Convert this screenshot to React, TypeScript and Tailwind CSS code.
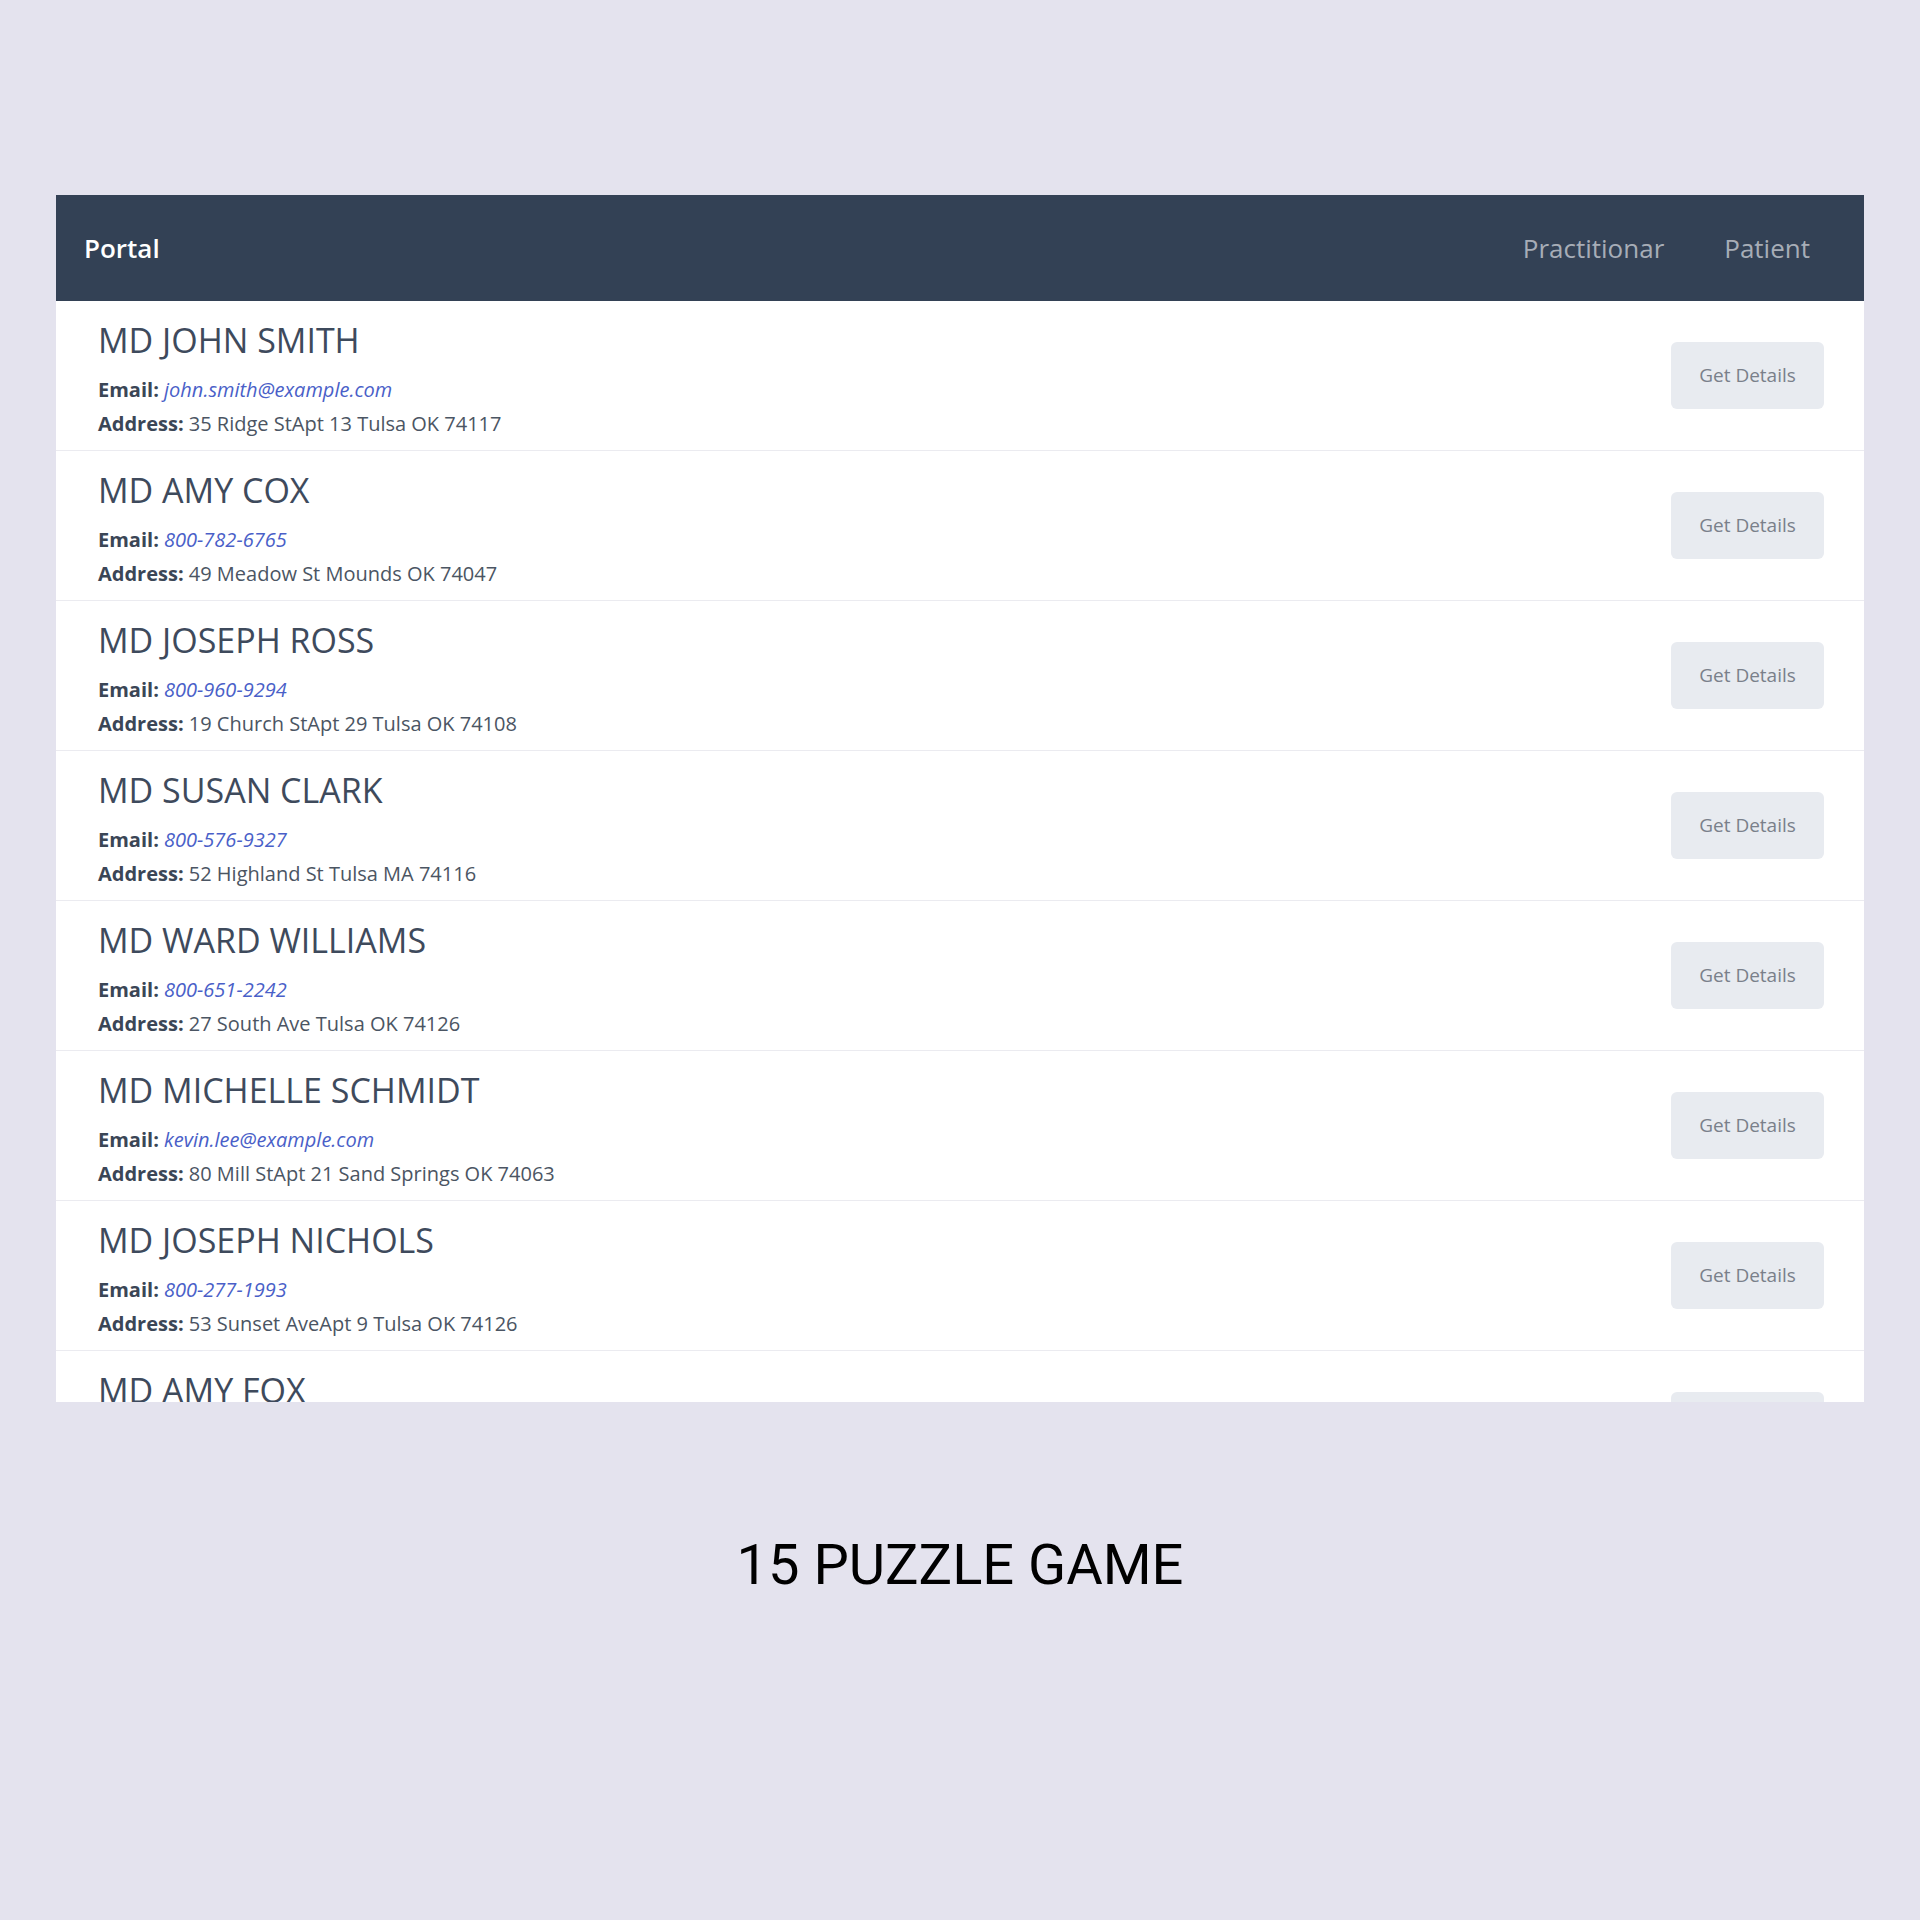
const doctors = [
  { name: "MD JOHN SMITH", email: "john.smith@example.com", address: "35 Ridge StApt 13 Tulsa OK 74117" },
  { name: "MD AMY COX", email: "800-782-6765", address: "49 Meadow St Mounds OK 74047" },
  { name: "MD JOSEPH ROSS", email: "800-960-9294", address: "19 Church StApt 29 Tulsa OK 74108" },
  { name: "MD SUSAN CLARK", email: "800-576-9327", address: "52 Highland St Tulsa MA 74116" },
  { name: "MD WARD WILLIAMS", email: "800-651-2242", address: "27 South Ave Tulsa OK 74126" },
  { name: "MD MICHELLE SCHMIDT", email: "kevin.lee@example.com", address: "80 Mill StApt 21 Sand Springs OK 74063" },
  { name: "MD JOSEPH NICHOLS", email: "800-277-1993", address: "53 Sunset AveApt 9 Tulsa OK 74126" },
  { name: "MD AMY FOX", email: "800-555-0142", address: "12 Pine St Tulsa OK 74105" },
];

const App = () => {
  return (
    <div className="w-[1920px] h-[1920px] bg-[#e4e3ee] flex flex-col items-center pt-[195px]">
      <div
        className="w-[1808px] h-[1207px] overflow-hidden bg-white flex flex-col"
        style={{ fontFamily: '"Open Sans", sans-serif' }}
      >
        <div className="h-[106px] shrink-0 bg-[#334155] flex items-center justify-between pl-[28px] pr-[54px]">
          <span className="text-[26px] text-white font-semibold">Portal</span>
          <div className="flex items-center gap-[60px] text-[26px] text-[#a7adb7]">
            <span>Practitionar</span>
            <span>Patient</span>
          </div>
        </div>
        {doctors.map((doc) => (
          <div
            key={doc.name}
            className="h-[150px] shrink-0 border-b border-[#ebebf0] flex items-center justify-between pl-[42px] pr-[40px]"
          >
            <div className="flex flex-col pt-[10px]">
              <h2 className="text-[34px] leading-[40px] text-[#3e4a5c]">{doc.name}</h2>
              <p className="mt-[13px] text-[20px] leading-[34px] text-[#4b5563]">
                <span className="font-bold text-[#3b4656]">Email: </span>
                <a className="italic text-[#4a5fc8]">{doc.email}</a>
              </p>
              <p className="text-[20px] leading-[34px] text-[#4b5563]">
                <span className="font-bold text-[#3b4656]">Address: </span>
                {doc.address}
              </p>
            </div>
            <button className="w-[153px] h-[67px] rounded-[6px] bg-[#e8ebf0] text-[19px] text-[#7a808a]">
              Get Details
            </button>
          </div>
        ))}
      </div>
      <p
        className="mt-[135px] text-[56px] text-black leading-none"
        style={{ fontFamily: "Roboto, sans-serif" }}
      >
        15 PUZZLE GAME
      </p>
    </div>
  );
};

export default App;
